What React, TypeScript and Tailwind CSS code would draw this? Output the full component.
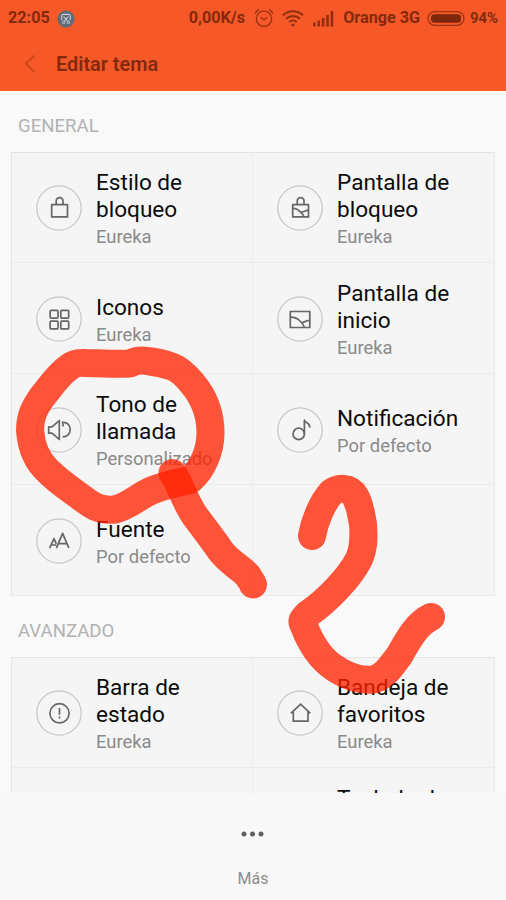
import type { ReactNode } from 'react'

type ThemeItem = {
  title: string
  value: string
  icon: ReactNode
}

const stroke = {
  fill: 'none',
  stroke: '#666',
  strokeWidth: 1.7,
  strokeLinejoin: 'round' as const,
}

// every icon is drawn on the 46px disc it sits in
const icons = {
  lock: (
    <g {...stroke}>
      <rect x="15.700" y="19.700" width="15.800" height="12.200" />
      <path d="M20.200 19.700v-3.700a3.400 3.400 0 0 1 6.800 0v3.700" />
    </g>
  ),
  lockWallpaper: (
    <g {...stroke}>
      <rect x="15.700" y="19.700" width="15.800" height="12.200" />
      <path d="M20.200 19.700v-3.700a3.400 3.400 0 0 1 6.800 0v3.700" />
      <path d="M15.700 23.200c3.200.2 5.300 1.400 7.200 3.200 1.800 1.600 3.200 3.300 4 5.500M23.300 26.700c1.700 1.200 4.400-.6 8.200-1.800" />
    </g>
  ),
  grid: (
    <g {...stroke}>
      <rect x="14.100" y="14.400" width="7.900" height="7.700" rx="1" />
      <rect x="24.800" y="14.400" width="7.900" height="7.700" rx="1" />
      <rect x="14.100" y="25.200" width="7.900" height="7.700" rx="1" />
      <rect x="24.800" y="25.200" width="7.900" height="7.700" rx="1" />
    </g>
  ),
  wallpaper: (
    <g {...stroke}>
      <rect x="13.300" y="15.500" width="19.500" height="16" />
      <path d="M13.300 21.200c4.500-.2 7.200 1.300 9.700 3.800 2 1.900 3.600 3.900 4.400 6.500M24 26.200c2 1.700 3.700-1.900 8.800-1.900" />
    </g>
  ),
  speaker: (
    <g {...stroke}>
      <path d="M12.700 19.800h3.200l7.400-6.200v18.800l-7.400-6.200h-3.200z" />
      <path d="M27.400 19.600l-.9-4.200c4.400-.8 7.700 2.800 7.700 7.200 0 4.200-3 7.200-7.500 7.200" />
    </g>
  ),
  note: (
    <g {...stroke}>
      <circle cx="21.700" cy="26.900" r="5.700" />
      <path d="M27.400 26.900V13.200c1.200 3.200 5.800 2.400 5.400 7.400" />
    </g>
  ),
  font: (
    <g {...stroke}>
      <path d="M13.600 30.200l4.400-9.600 2.300 5.200M15.300 27h5M20.400 30.200l6.200-14.800 6.300 14.800M22.600 25.600h8.200" />
    </g>
  ),
  status: (
    <g {...stroke}>
      <circle cx="23.500" cy="23.300" r="9.600" />
      <path d="M23.500 18v6.700M23.500 26.500v2" />
    </g>
  ),
  home: (
    <g {...stroke} strokeLinejoin="miter">
      <path d="M13.800 23.400l9.800-9.200 9.800 9.200M16.300 21.600v9.500h14.700v-9.500" />
    </g>
  ),
}

const general: ThemeItem[] = [
  { title: 'Estilo de bloqueo', value: 'Eureka', icon: icons.lock },
  { title: 'Pantalla de bloqueo', value: 'Eureka', icon: icons.lockWallpaper },
  { title: 'Iconos', value: 'Eureka', icon: icons.grid },
  { title: 'Pantalla de inicio', value: 'Eureka', icon: icons.wallpaper },
  { title: 'Tono de llamada', value: 'Personalizado', icon: icons.speaker },
  { title: 'Notificación', value: 'Por defecto', icon: icons.note },
  { title: 'Fuente', value: 'Por defecto', icon: icons.font },
]

const advanced: ThemeItem[] = [
  { title: 'Barra de estado', value: 'Eureka', icon: icons.status },
  { title: 'Bandeja de favoritos', value: 'Eureka', icon: icons.home },
]

function Cell({ item }: { item?: ThemeItem }) {
  return (
    <div className="flex h-[111px] items-center border-b border-r border-[#ebebeb] pl-6 pt-px">
      {item && (
        <>
          <svg className="h-[46px] w-[46px] shrink-0" viewBox="0 0 46 46">
            <circle cx="23" cy="23" r="22.200" fill="none" stroke="#c6c6c6" strokeWidth="1.200" />
            {item.icon}
          </svg>
          <div className="ml-3.5 w-[125px] pt-[5px]">
            <div className="text-[22.600px] leading-[27px] text-[#0c0c0c]">{item.title}</div>
            <div className="whitespace-nowrap text-[18.400px] leading-[28px] text-[#8a8a8a]">{item.value}</div>
          </div>
        </>
      )}
    </div>
  )
}

function Section({ label, children }: { label: string; children: ReactNode }) {
  return (
    <section>
      <h2 className="flex h-[61px] items-center pl-[18px] pt-2.5 text-[18.600px] text-[#b2b2b2]">{label}</h2>
      <div className="ml-[11px] grid w-[484px] grid-cols-[241px_242px] border-l border-[#e4e4e4] bg-[#f5f5f5] shadow-[inset_0_1px_0_#e4e4e4]">
        {children}
      </div>
    </section>
  )
}

function StatusBar() {
  return (
    <div className="flex h-[37px] items-center pl-2 pr-2 text-[16.200px] font-bold">
      <span>22:05</span>
      <svg className="ml-[7px] h-[18px] w-[18px]" viewBox="0 0 18 18">
        <circle cx="9" cy="9" r="8.600" fill="#5f6c7b" />
        <path
          d="M4.800 10V5.400a1 1 0 0 1 1-1h6.400a1 1 0 0 1 1 1V10M6.800 6.500l4 5M11.200 6.500l-4 5"
          fill="none"
          stroke="#dce3ea"
          strokeWidth="1"
        />
        <circle cx="6.600" cy="12.400" r="1.200" fill="none" stroke="#dce3ea" strokeWidth=".8" />
        <circle cx="11.400" cy="12.400" r="1.200" fill="none" stroke="#dce3ea" strokeWidth=".8" />
      </svg>
      <span className="ml-auto">0,00K/s</span>
      <svg className="ml-[9px] h-5 w-5" viewBox="0 0 20 20" fill="none" stroke="#9c3413" strokeWidth="1.400">
        <circle cx="10" cy="9.800" r="7.700" />
        <path d="M6.800 8.400l3.200 2.400 3.400-2.600M1.200 4.500a6 6 0 0 1 4-3.900M14.800.6a6 6 0 0 1 4 3.900" />
      </svg>
      <svg className="ml-2 h-[18px] w-[22px]" viewBox="0 0 22 18" fill="none" stroke="#8f2e10" strokeWidth="2">
        <path d="M1 5.200a14.500 14.500 0 0 1 20 0M4 8.800a10.200 10.200 0 0 1 14 0M7.200 12a5.500 5.500 0 0 1 7.600 0" />
        <circle cx="11" cy="15" r="1.600" fill="#8f2e10" stroke="none" />
      </svg>
      <svg className="ml-[9px] h-[18px] w-[21px]" viewBox="0 0 21 18" fill="#8f2e10">
        <rect x="0" y="12.500" width="2.600" height="4" />
        <rect x="4.400" y="10.500" width="2.600" height="6" />
        <rect x="8.800" y="8" width="2.600" height="8.500" />
        <rect x="13.200" y="5" width="2.600" height="11.500" />
        <rect x="17.600" y="1" width="2.600" height="15.500" />
      </svg>
      <span className="ml-[9px]">Orange 3G</span>
      <svg className="ml-[7px] h-4 w-[38px]" viewBox="0 0 38 16">
        <rect x="1" y=".7" width="36" height="13.600" rx="6.800" fill="none" stroke="#9c3413" strokeWidth="1.300" />
        <rect x="4" y="3.200" width="30" height="8.600" rx="3.500" fill="#7d270c" />
      </svg>
      <span className="ml-[5px] text-[14.800px]">94%</span>
    </div>
  )
}

// finger-drawn marks on top of the screen
function Marks() {
  return (
    <svg
      className="pointer-events-none absolute inset-0 h-[900px] w-[506px]"
      viewBox="0 0 506 900"
      fill="none"
      stroke="#ff2200"
      strokeOpacity=".77"
      strokeWidth="28"
      strokeLinecap="round"
      strokeLinejoin="round"
    >
      <path d="M130 363.500C134 361.500 141 360 147 361C156 362 165 364 173 367C181 370 187 377 192 383C204 397 210.500 414 210.500 433C210.500 450 203 469 190 480C181 482 165 485 153 490C138 496 130 506 115 509.500C98 511 91 505 78 495C67 487 58 481 48 471C36 460 31 445 30 430C30 416 35 407 42 397C49 389 57 376 68 368C73 363 79 362.500 86 363C100 363.500 116 364 130 363.500Z" />
      <path d="M172.500 473C180 483 184 500 195 516C206 531 212 538 220 550C228 562 243 569 248 576C250 580 252 581 253 584.500" />
      <path d="M312 536C315 519 323 502 331 493C338 487 350 487 355 496C360 504 361 514 363 524C364 537 364 548 359 559C350 577 328 600 308 614C302 620 301 621 304 626C311 644 320 658 333 667C346 676 361 681 373 679.500C385 677 391 666 399 656C407 642 416 624 431 617" />
    </svg>
  )
}

export default function App() {
  return (
    <div className="relative flex h-[900px] w-[506px] flex-col overflow-hidden bg-[#f9f9f9] font-[Roboto,sans-serif]">
      <header className="h-[91px] shrink-0 bg-[#f75827] text-[#822a0e]">
        <StatusBar />
        <div className="flex h-14 items-center pl-6">
          <svg className="h-5 w-3" viewBox="0 0 12 20" fill="none" stroke="#c6431b" strokeWidth="1.700">
            <path d="M10.500 .5L2 8.500l8.500 8.500" />
          </svg>
          <h1 className="ml-5 text-[19.900px] font-semibold">Editar tema</h1>
        </div>
      </header>

      <main className="h-[702px] shrink-0 overflow-hidden">
        <Section label="GENERAL">
          {general.map((item) => (
            <Cell key={item.title} item={item} />
          ))}
          <Cell />
        </Section>
        <Section label="AVANZADO">
          {advanced.map((item) => (
            <Cell key={item.title} item={item} />
          ))}
          <Cell />
          <Cell item={{ title: 'Teclado de marcación', value: 'Eureka', icon: null }} />
        </Section>
      </main>

      <footer className="flex flex-1 flex-col items-center bg-[#f8f8f8] text-[#8c8c8c]">
        <svg className="mt-[38px] h-[6px] w-6" viewBox="0 0 24 6" fill="#606060">
          <circle cx="3" cy="3" r="2.500" />
          <circle cx="11.500" cy="3" r="2.500" />
          <circle cx="20" cy="3" r="2.500" />
        </svg>
        <span className="mt-8 text-[16px] leading-5">Más</span>
      </footer>

      <Marks />
    </div>
  )
}
